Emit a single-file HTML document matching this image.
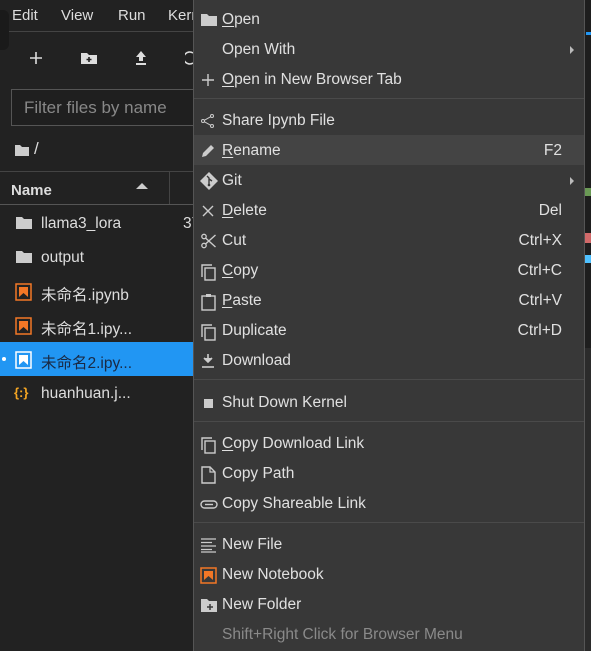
<!DOCTYPE html>
<html><head><meta charset="utf-8"><style>
*{margin:0;padding:0;box-sizing:border-box}
body{width:591px;height:651px;overflow:hidden;background:#222;font-family:"Liberation Sans","Noto Sans CJK SC",sans-serif;color:#ddd;position:relative}
.abs{position:absolute}
.menubar{top:0;left:0;width:193px;height:32px;border-bottom:1px solid #444;font-size:15px}
.menubar span{position:absolute;top:7px}
.menu{left:193px;top:0;width:392px;height:651px;background:#383838;border-left:1px solid #555;border-right:1px solid #555}
.it{position:absolute;left:0;width:390px;height:30px;font-size:15.5px;color:#e0e0e0}
.it .t{position:absolute;left:28px;top:7px}
.it .k{position:absolute;right:22px;top:7px}
.it svg{position:absolute;left:6px;top:8px}
.it .ar{position:absolute;right:10px;top:12px;width:0;height:0;border-left:4px solid #bbb;border-top:4px solid transparent;border-bottom:4px solid transparent}
.sep{position:absolute;left:0;width:390px;height:1px;background:#4a4a4a}
u{text-decoration:underline;text-underline-offset:2px}
.row{position:absolute;left:0;width:193px;height:34px;font-size:15.5px;color:#ddd}
.row .n{position:absolute;left:41px;top:9px}
.row svg{position:absolute;left:15px;top:9px}
</style></head><body>
<div class="abs menubar"><span style="left:12px">Edit</span><span style="left:61px">View</span><span style="left:118px">Run</span><span style="left:168px">Kern</span></div>
<div class="abs" style="left:0;top:10px;width:9px;height:40px;background:#1a1a1a;border-radius:0 6px 6px 0"></div>
<svg class="abs" style="left:28px;top:50px" width="16" height="16"><path d="M8 2v12M2 8h12" stroke="#ddd" stroke-width="1.6"/></svg>
<svg class="abs" style="left:80px;top:50px" width="18" height="16"><path d="M1 3h6l2 2h8v9H1z" fill="#ddd"/><path d="M9 7v5M6.5 9.5h5" stroke="#222" stroke-width="1.6"/></svg>
<svg class="abs" style="left:133px;top:49px" width="16" height="18"><path d="M8 2l5 6H10v4H6V8H3z M3 14h10v2H3z" fill="#ddd"/></svg>
<svg class="abs" style="left:185px;top:50px" width="10" height="16"><path d="M8 3a6 6 0 1 0 0 10" stroke="#ddd" stroke-width="1.6" fill="none"/></svg>
<div class="abs" style="left:11px;top:89px;width:190px;height:37px;border:1px solid #555;background:#1f1f1f"></div>
<div class="abs" style="left:24px;top:98px;font-size:17px;color:#888">Filter files by name</div>
<svg class="abs" style="left:14px;top:143px" width="16" height="14"><path d="M1 2h5l2 2h7v9H1z" fill="#ccc"/></svg>
<div class="abs" style="left:34px;top:139px;font-size:17px">/</div>
<div class="abs" style="left:0;top:171px;width:193px;height:34px;border-top:1px solid #444;border-bottom:1px solid #555"></div>
<div class="abs" style="left:169px;top:172px;width:1px;height:32px;background:#444"></div>
<div class="abs" style="left:11px;top:182px;font-size:15px;font-weight:bold;color:#ddd">Name</div>
<div class="abs" style="left:136px;top:183px;width:0;height:0;border-left:6px solid transparent;border-right:6px solid transparent;border-bottom:6px solid #ccc"></div>
<div class="row" style="top:206px"><svg width="18" height="16"><path d="M1 2h6l2 2h8v10H1z" fill="#ccc"/></svg><span class="n">llama3_lora</span><span class="n" style="left:183px">37</span></div>
<div class="row" style="top:240px"><svg width="18" height="16"><path d="M1 2h6l2 2h8v10H1z" fill="#ccc"/></svg><span class="n">output</span></div>
<div class="row" style="top:274px"><svg width="18" height="18"><rect x="1" y="1" width="15" height="16" fill="none" stroke="#f37726" stroke-width="1.5"/><path d="M4 4h9v10l-4.5-4L4 14z" fill="#f37726"/></svg><span class="n">未命名.ipynb</span></div>
<div class="row" style="top:308px"><svg width="18" height="18"><rect x="1" y="1" width="15" height="16" fill="none" stroke="#f37726" stroke-width="1.5"/><path d="M4 4h9v10l-4.5-4L4 14z" fill="#f37726"/></svg><span class="n">未命名1.ipy...</span></div>
<div class="row" style="top:342px;background:#2196f3;color:#fff"><div class="abs" style="left:2px;top:15px;width:4px;height:4px;border-radius:2px;background:#fff"></div><svg width="18" height="18"><rect x="1" y="1" width="15" height="16" fill="none" stroke="#fff" stroke-width="1.5"/><path d="M4 4h9v10l-4.5-4L4 14z" fill="#fff"/></svg><span class="n" style="color:#1a2a44">未命名2.ipy...</span></div>
<div class="row" style="top:376px"><span class="abs" style="left:14px;top:9px;color:#f5a623;font-weight:bold;font-size:13px">{:}</span><span class="n">huanhuan.j...</span></div>
<div class="abs" style="left:585px;top:0;width:6px;height:348px;background:#1e1e1e"></div>
<div class="abs" style="left:585px;top:348px;width:6px;height:303px;background:#2b2b2b"></div>
<div class="abs" style="left:586px;top:32px;width:5px;height:3px;background:#2196f3"></div>
<div class="abs" style="left:585px;top:188px;width:6px;height:8px;background:#6a9955"></div>
<div class="abs" style="left:585px;top:233px;width:6px;height:10px;background:#d16969"></div>
<div class="abs" style="left:585px;top:255px;width:6px;height:8px;background:#4fc1ff"></div>
<div class="abs menu">
<div class="it" style="top:4px"><svg width="18" height="16"><path d="M1 2h6l2 2h8v10H1z" fill="#ccc"/></svg><span class="t"><u>O</u>pen</span></div>
<div class="it" style="top:34px"><span class="t">Open With</span><span class="ar"></span></div>
<div class="it" style="top:64px"><svg width="16" height="16"><path d="M8 2v12M2 8h12" stroke="#ccc" stroke-width="1.4"/></svg><span class="t"><u>O</u>pen in New Browser Tab</span></div>
<div class="sep" style="top:98px"></div>
<div class="it" style="top:105px"><svg width="16" height="16"><circle cx="12" cy="3" r="1.5" fill="none" stroke="#ccc"/><circle cx="3" cy="8" r="1.5" fill="none" stroke="#ccc"/><circle cx="12" cy="13" r="1.5" fill="none" stroke="#ccc"/><path d="M4.3 7.3l6.4-3.6M4.3 8.7l6.4 3.6" stroke="#ccc"/></svg><span class="t">Share Ipynb File</span></div>
<div class="it" style="top:135px;background:#444"><svg width="16" height="16"><path d="M2 14l1-4 8-8 3 3-8 8z" fill="#ccc"/></svg><span class="t"><u>R</u>ename</span><span class="k">F2</span></div>
<div class="it" style="top:165px"><svg width="20" height="20" style="left:5px;top:6px"><path d="M10 1l9 9-9 9-9-9z" fill="#ccc"/><path d="M8 5l2 2v7M10 8l3 2" stroke="#383838" stroke-width="1.4" fill="none"/><circle cx="10" cy="14" r="1.3" fill="#383838"/></svg><span class="t">Git</span><span class="ar"></span></div>
<div class="it" style="top:195px"><svg width="16" height="16"><path d="M3 3l10 10M13 3L3 13" stroke="#ccc" stroke-width="1.4"/></svg><span class="t"><u>D</u>elete</span><span class="k">Del</span></div>
<div class="it" style="top:225px"><svg width="18" height="16"><circle cx="4" cy="3.5" r="2.2" fill="none" stroke="#ccc" stroke-width="1.3"/><circle cx="4" cy="12.5" r="2.2" fill="none" stroke="#ccc" stroke-width="1.3"/><path d="M5.5 5l10 9M5.5 11l10-9" stroke="#ccc" stroke-width="1.4"/></svg><span class="t">Cut</span><span class="k">Ctrl+X</span></div>
<div class="it" style="top:255px"><svg width="18" height="18"><path d="M2 14V2h10" fill="none" stroke="#ccc" stroke-width="1.4"/><rect x="5" y="5" width="10" height="12" fill="none" stroke="#ccc" stroke-width="1.4"/></svg><span class="t"><u>C</u>opy</span><span class="k">Ctrl+C</span></div>
<div class="it" style="top:285px"><svg width="18" height="18"><rect x="2" y="3" width="13" height="14" fill="none" stroke="#ccc" stroke-width="1.4"/><rect x="6" y="1" width="5" height="3" fill="#ccc"/></svg><span class="t"><u>P</u>aste</span><span class="k">Ctrl+V</span></div>
<div class="it" style="top:315px"><svg width="18" height="18"><path d="M2 14V2h10" fill="none" stroke="#ccc" stroke-width="1.4"/><rect x="5" y="5" width="10" height="12" fill="none" stroke="#ccc" stroke-width="1.4"/></svg><span class="t">Duplicate</span><span class="k">Ctrl+D</span></div>
<div class="it" style="top:345px"><svg width="16" height="16"><path d="M8 1v7M4 5l4 4 4-4" fill="#ccc" stroke="#ccc" stroke-width="1.6"/><path d="M2 14h12" stroke="#ccc" stroke-width="1.6"/></svg><span class="t">Download</span></div>
<div class="sep" style="top:379px"></div>
<div class="it" style="top:387px"><svg width="16" height="16"><rect x="4" y="4" width="9" height="9" fill="#ccc"/></svg><span class="t">Shut Down Kernel</span></div>
<div class="sep" style="top:421px"></div>
<div class="it" style="top:428px"><svg width="18" height="18"><path d="M2 14V2h10" fill="none" stroke="#ccc" stroke-width="1.4"/><rect x="5" y="5" width="10" height="12" fill="none" stroke="#ccc" stroke-width="1.4"/></svg><span class="t"><u>C</u>opy Download Link</span></div>
<div class="it" style="top:458px"><svg width="18" height="18"><path d="M2 1h8l5 5v11H2z" fill="none" stroke="#ccc" stroke-width="1.4"/><path d="M10 1v5h5" fill="none" stroke="#ccc" stroke-width="1.2"/></svg><span class="t">Copy Path</span></div>
<div class="it" style="top:488px"><svg width="18" height="16"><rect x="1" y="5" width="16" height="7" rx="3.5" fill="none" stroke="#ccc" stroke-width="1.4"/><path d="M5 8.5h8" stroke="#ccc" stroke-width="1.4"/></svg><span class="t">Copy Shareable Link</span></div>
<div class="sep" style="top:522px"></div>
<div class="it" style="top:529px"><svg width="18" height="16"><path d="M1 2h15M1 5.5h11M1 9h15M1 12.5h11M1 15h15" stroke="#ccc" stroke-width="1.2"/></svg><span class="t">New File</span></div>
<div class="it" style="top:559px"><svg width="18" height="18"><rect x="1" y="1" width="15" height="15" fill="none" stroke="#f37726" stroke-width="1.5"/><path d="M4 4h9v9l-4.5-4L4 13z" fill="#f37726"/></svg><span class="t">New Notebook</span></div>
<div class="it" style="top:589px"><svg width="18" height="16"><path d="M1 2h6l2 2h8v11H1z" fill="#ccc"/><path d="M10 7v6M7 10h6" stroke="#383838" stroke-width="1.5"/></svg><span class="t">New Folder</span></div>
<div class="it" style="top:619px;color:#8a8a8a"><span class="t">Shift+Right Click for Browser Menu</span></div>
</div>
</body></html>
